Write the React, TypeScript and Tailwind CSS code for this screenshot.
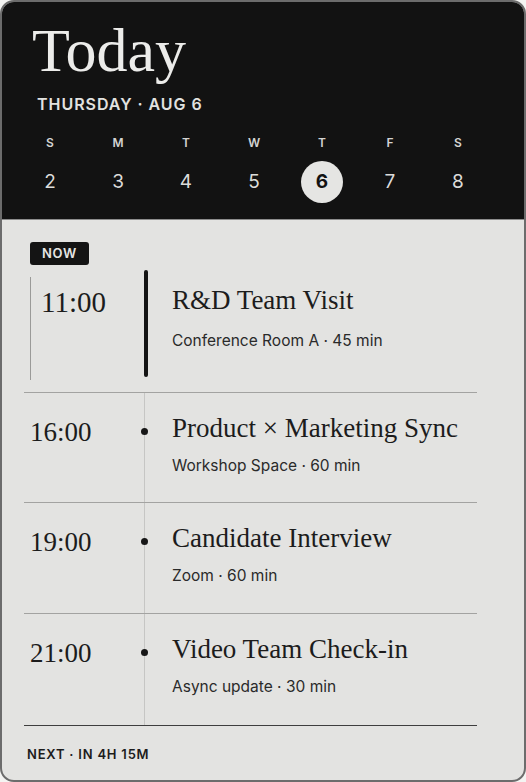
const serif = "font-['Liberation_Serif',serif]"

const days = [
  { d: 'S', n: 2 },
  { d: 'M', n: 3 },
  { d: 'T', n: 4 },
  { d: 'W', n: 5 },
  { d: 'T', n: 6, active: true },
  { d: 'F', n: 7 },
  { d: 'S', n: 8 },
]

const upcoming = [
  { time: '16:00', title: 'Product × Marketing Sync', meta: 'Workshop Space · 60 min', h: 'h-[109px]' },
  { time: '19:00', title: 'Candidate Interview', meta: 'Zoom · 60 min', h: 'h-[111px]' },
  { time: '21:00', title: 'Video Team Check-in', meta: 'Async update · 30 min', h: 'h-[112px]' },
]

export default function App() {
  return (
    <div className="w-[526px] h-[782px] bg-[#f4f4f2] font-['Inter',sans-serif]">
      <div className="h-full flex flex-col rounded-[14px] border-2 border-[#6c6c6c] overflow-hidden bg-[#e3e3e1]">
        {/* Header */}
        <div className="h-[218px] shrink-0 bg-[#121212] border-b border-[#8c8c8c] flex flex-col">
          <h1 className={`${serif} text-[62px] leading-none text-[#ececea] pl-[30px] pt-[17px]`}>Today</h1>
          <div className="pl-[35px] mt-[11px] text-[16px] font-semibold tracking-[0.06em] text-[#e2e2e0]">
            THURSDAY · AUG 6
          </div>
          <div className="pl-[14px] mt-[21px] grid grid-cols-7 w-[490px]">
            {days.map((day, i) => (
              <div key={i} className="flex flex-col items-center">
                <span className="text-[12px] font-semibold text-[#d4d4d2] leading-none">{day.d}</span>
                <span
                  className={`mt-[12px] w-[42px] h-[42px] flex items-center justify-center rounded-full text-[19px] ${
                    day.active ? 'bg-[#e5e5e3] text-[#121212] font-bold' : 'text-[#dcdcda]'
                  }`}
                >
                  {day.n}
                </span>
              </div>
            ))}
          </div>
        </div>

        {/* Current event */}
        <div className="ml-[22px] w-[453px] pt-[20px]">
          <span className="ml-[6px] inline-flex h-[23px] px-[12px] items-center rounded-[3px] bg-[#141414] text-[13px] font-semibold tracking-[0.05em] text-[#e6e6e4]">
            NOW
          </span>
          <div className="flex mt-[5px] h-[107px]">
            <div className="ml-[6px] w-[114px] mt-[7px] h-[103px] border-l-[1.5px] border-[#9a9a98] pl-[10px] pt-[11px]">
              <span className={`${serif} text-[29px] leading-none text-[#1c1c1c]`}>11:00</span>
            </div>
            <div className="w-[4px] h-[107px] rounded-full bg-[#141414]" />
            <div className="pl-[24px] pt-[17px]">
              <div className={`${serif} text-[27px] leading-none text-[#1c1c1c]`}>R&amp;D Team Visit</div>
              <div className="mt-[15px] text-[15.5px] text-[#2a2a2a]">Conference Room A · 45 min</div>
            </div>
          </div>
        </div>

        {/* Upcoming */}
        <div className="ml-[22px] w-[453px] mt-[15px] border-t border-[#a3a3a1]">
          {upcoming.map((ev, i) => (
            <div key={i} className={`flex ${ev.h} ${i > 0 ? 'border-t border-[#a3a3a1]' : ''}`}>
              <div className="w-[120px] pl-[6px] pt-[26px]">
                <span className={`${serif} text-[27px] leading-none text-[#1c1c1c]`}>{ev.time}</span>
              </div>
              <div className="relative flex-1 border-l border-[#c6c6c4] pl-[27px] pt-[22px]">
                <span className="absolute left-[-4px] top-[35px] w-[7px] h-[7px] rounded-full bg-[#161616]" />
                <div className={`${serif} text-[27px] leading-none text-[#1c1c1c]`}>{ev.title}</div>
                <div className="mt-[12px] text-[15.5px] text-[#2a2a2a]">{ev.meta}</div>
              </div>
            </div>
          ))}
        </div>

        {/* Footer */}
        <div className="ml-[22px] w-[453px] border-t border-[#3e3e3e] pt-[19px] pl-[3px] text-[13px] font-semibold tracking-[0.06em] text-[#1c1c1c]">
          NEXT · IN 4H 15M
        </div>
      </div>
    </div>
  )
}
